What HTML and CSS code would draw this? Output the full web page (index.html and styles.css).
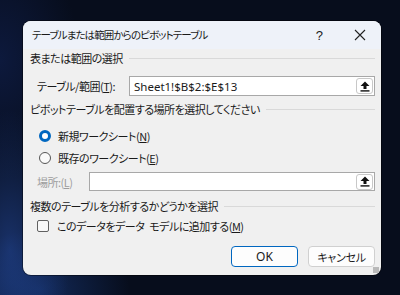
FILE: index.html
```html
<!DOCTYPE html>
<html lang="ja">
<head>
    <meta charset="UTF-8">
    <title>ピボットテーブル</title>
    <link rel="stylesheet" href="styles.css">
</head>
<body>
    <div class="dialog">
        <div class="titlebar">
            <span class="title">テーブルまたは範囲からのピボットテーブル</span>
            <span class="help">?</span>
            <span class="close">
                <svg width="12" height="12" viewBox="0 0 12 12"><path d="M1 1L11 11M11 1L1 11" stroke="#222" stroke-width="1.1"/></svg>
            </span>
        </div>

        <div class="content">
            <div class="group-head"><span>表または範囲の選択</span></div>
            <div class="field-row">
                <label class="field-label">テーブル/範囲(<u>T</u>):</label>
                <div class="ref-input">
                    <span class="ref-text">Sheet1!$B$2:$E$13</span>
                    <span class="ref-btn">
                        <svg width="10" height="11" viewBox="0 0 10 11"><path d="M5 0.5L9.5 5H6.5V8H3.5V5H0.5Z" fill="#111"/><rect x="0.5" y="9.2" width="9" height="1.4" fill="#111"/></svg>
                    </span>
                </div>
            </div>

            <div class="group-head"><span>ピボットテーブルを配置する場所を選択してください</span></div>
            <div class="option-row first">
                <span class="radio checked"></span>
                <span>新規ワークシート(<u>N</u>)</span>
            </div>
            <div class="option-row">
                <span class="radio"></span>
                <span>既存のワークシート(<u>E</u>)</span>
            </div>
            <div class="field-row location">
                <label class="field-label disabled">場所:(<u>L</u>)</label>
                <div class="ref-input">
                    <span class="ref-text"></span>
                    <span class="ref-btn">
                        <svg width="10" height="11" viewBox="0 0 10 11"><path d="M5 0.5L9.5 5H6.5V8H3.5V5H0.5Z" fill="#111"/><rect x="0.5" y="9.2" width="9" height="1.4" fill="#111"/></svg>
                    </span>
                </div>
            </div>

            <div class="group-head"><span>複数のテーブルを分析するかどうかを選択</span></div>
            <div class="option-row check-row">
                <span class="checkbox"></span>
                <span class="check-label">このデータをデータ モデルに追加する(<u>M</u>)</span>
            </div>

            <div class="buttons">
                <button class="btn primary">OK</button>
                <button class="btn">キャンセル</button>
            </div>
        </div>
        <span class="grip"></span>
    </div>
</body>
</html>
```

FILE: styles.css
```css
* {
    margin: 0;
    padding: 0;
    box-sizing: border-box;
}

body {
    width: 400px;
    height: 295px;
    overflow: hidden;
    padding: 21px 0 0 23px;
    font-family: 'Noto Sans CJK JP', 'Noto Sans', sans-serif;
    font-feature-settings: "palt";
    font-size: 11px;
    letter-spacing: -0.5px;
    color: #1a1a1a;
    background:
        radial-gradient(ellipse 60px 140px at 10px 250px, rgba(40, 80, 170, 0.55), transparent),
        radial-gradient(ellipse 90px 60px at 40px 290px, rgba(30, 70, 150, 0.5), transparent),
        radial-gradient(ellipse 80px 120px at 0px 60px, rgba(20, 40, 100, 0.45), transparent),
        #070d1c;
}

.dialog {
    position: relative;
    width: 358px;
    height: 254px;
    background: #f0f0f0;
    border-radius: 8px;
    overflow: hidden;
    box-shadow: 0 0 0 1px rgba(0, 0, 0, 0.4);
}

.titlebar {
    height: 28px;
    background: #eef2f9;
    display: flex;
    align-items: center;
    padding-left: 9px;
}

.title {
    flex: 1;
    font-size: 10.5px;
    letter-spacing: -0.9px;
    margin-top: -1px;
}

.help {
    width: 14px;
    margin-right: 28px;
    font-family: 'Liberation Sans', sans-serif;
    font-size: 13px;
    text-align: center;
}

.close {
    width: 12px;
    margin-right: 15px;
    display: flex;
}

.content {
    padding: 1px 6px 0 7px;
}

.group-head {
    height: 16px;
    display: flex;
    align-items: center;
    gap: 6px;
}

.group-head::after {
    content: "";
    flex: 1;
    height: 1px;
    background: #d9d9d9;
}

.field-row {
    display: flex;
    align-items: center;
    height: 20px;
    margin: 10px 0 5px;
}

.field-label {
    width: 99px;
    padding-left: 7px;
    white-space: nowrap;
}

.disabled {
    color: #9d9d9d;
    width: 59px;
}

.ref-input {
    flex: 1;
    height: 20px;
    background: #fff;
    border: 1px solid #a8a8a8;
    display: flex;
    align-items: center;
    padding-left: 4px;
}

.ref-text {
    flex: 1;
    font-family: 'Noto Sans', sans-serif;
    font-size: 11.5px;
    letter-spacing: 0;
}

.ref-btn {
    width: 17px;
    height: 16px;
    margin-right: 1px;
    border: 1px solid #c8c8c8;
    border-radius: 3px;
    background: #fff;
    display: flex;
    align-items: center;
    justify-content: center;
}

.option-row {
    height: 16px;
    display: flex;
    align-items: center;
    gap: 7px;
    padding-left: 9px;
    margin-top: 6px;
}

.option-row.first {
    margin-top: 11px;
}

.radio {
    width: 12px;
    height: 12px;
    border-radius: 50%;
    border: 1px solid #555;
    background: #fafafa;
}

.radio.checked {
    border: 3.5px solid #0067c0;
    background: #fff;
}

.location {
    margin: 6px 0 7px;
    height: 19px;
}

.location .ref-input {
    height: 19px;
}

.option-row.check-row {
    margin-top: 4px;
    gap: 8px;
    padding-left: 7px;
}

.check-label {
    word-spacing: 3px;
}

.checkbox {
    width: 12px;
    height: 12px;
    border: 1px solid #606060;
    border-radius: 2px;
    background: #f7f7f7;
}

.buttons {
    display: flex;
    justify-content: flex-end;
    gap: 10px;
    margin-top: 12px;
}

.btn {
    width: 67px;
    height: 21px;
    border: 1px solid #d0d0d0;
    border-radius: 4px;
    background: #fdfdfd;
    font-family: 'Noto Sans CJK JP', 'Noto Sans', sans-serif;
    font-feature-settings: "palt";
    font-size: 11px;
    letter-spacing: -0.3px;
    color: #1a1a1a;
}

.btn.primary {
    border: 1.5px solid #0067c0;
    font-family: 'Noto Sans', sans-serif;
    font-size: 12px;
    letter-spacing: 0;
}

.grip {
    position: absolute;
    right: 2px;
    bottom: 2px;
    width: 6px;
    height: 6px;
    background: radial-gradient(circle, #b5b5b5 0.7px, transparent 0.8px) 0 0 / 2px 2px;
}
```
